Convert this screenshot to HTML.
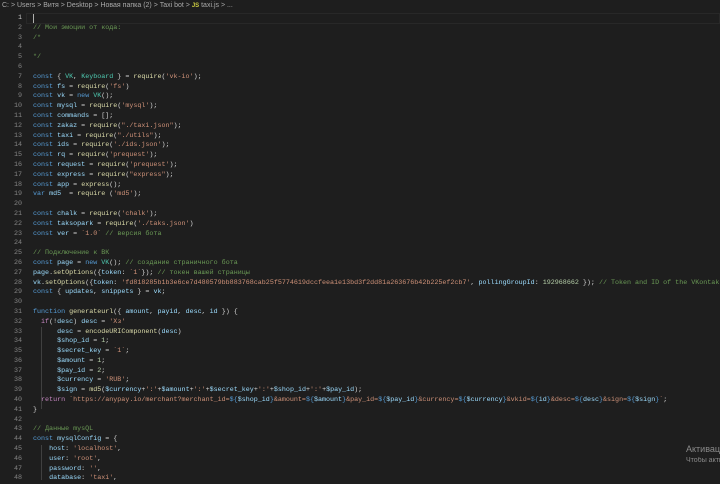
<!DOCTYPE html>
<html><head><meta charset="utf-8"><style>
html,body{margin:0;padding:0;width:720px;height:480px;overflow:hidden;background:#1e1e1e}
.bc{position:absolute;left:2px;top:2px;font:7px "Liberation Sans",sans-serif;color:#a9a9a9;white-space:nowrap}
.bc .js{color:#cbcb41;font-weight:bold;font-size:6px}
.ln{position:absolute;left:0;top:14px;width:22px;text-align:right;font:6.7px/9.79px "Liberation Mono",monospace;color:#858585;white-space:pre}
.code{position:absolute;left:33px;top:14px;width:687px;height:466px;overflow:hidden;font:6.7px/9.79px "Liberation Mono",monospace;color:#d4d4d4;white-space:pre}
.cur{position:absolute;left:26px;top:13px;width:692px;height:9px;border:1px solid #282828}
.caret{position:absolute;left:33px;top:14px;width:1px;height:9px;background:#aeafad}
.k{color:#569cd6}.v{color:#9cdcfe}.f{color:#dcdcaa}.s{color:#ce9178}.c{color:#6a9955}.n{color:#b5cea8}.t{color:#4ec9b0}.p{color:#c586c0}
.wm{position:absolute;left:686px;top:444px;font:9px "Liberation Sans",sans-serif;color:#8a8a8a;white-space:nowrap;width:34px;overflow:hidden}
.wm2{position:absolute;left:686px;top:457px;font:7px "Liberation Sans",sans-serif;color:#8a8a8a;white-space:nowrap;width:34px;overflow:hidden}
.g{position:absolute;width:1px;background:#404040}
</style></head><body>
<div class="bc">C: &gt; Users &gt; Витя &gt; Desktop &gt; Новая папка (2) &gt; Taxi bot &gt; <span class="js">JS</span> taxi.js &gt; ...</div>
<div class="cur"></div><div class="caret"></div>
<div class="g" style="left:41px;top:327px;height:82px"></div>
<div class="g" style="left:41px;top:445px;height:35px"></div>
<div class="ln"><span style="color:#c6c6c6">1</span>
2
3
4
5
6
7
8
9
10
11
12
13
14
15
16
17
18
19
20
21
22
23
24
25
26
27
28
29
30
31
32
33
34
35
36
37
38
39
40
41
42
43
44
45
46
47
48</div>
<div class="code">
<span class="c">// Мои эмоции от кода:</span>
<span class="c">/*</span>

<span class="c">*/</span>

<span class="k">const</span> { <span class="t">VK</span>, <span class="t">Keyboard</span> } = <span class="f">require</span>(<span class="s">'vk-io'</span>);
<span class="k">const</span> <span class="v">fs</span> = <span class="f">require</span>(<span class="s">'fs'</span>)
<span class="k">const</span> <span class="v">vk</span> = <span class="k">new</span> <span class="t">VK</span>();
<span class="k">const</span> <span class="v">mysql</span> = <span class="f">require</span>(<span class="s">'mysql'</span>);
<span class="k">const</span> <span class="v">commands</span> = [];
<span class="k">const</span> <span class="v">zakaz</span> = <span class="f">require</span>(<span class="s">"./taxi.json"</span>);
<span class="k">const</span> <span class="v">taxi</span> = <span class="f">require</span>(<span class="s">"./utils"</span>);
<span class="k">const</span> <span class="v">ids</span> = <span class="f">require</span>(<span class="s">'./ids.json'</span>);
<span class="k">const</span> <span class="v">rq</span> = <span class="f">require</span>(<span class="s">'prequest'</span>);
<span class="k">const</span> <span class="v">request</span> = <span class="f">require</span>(<span class="s">'prequest'</span>);
<span class="k">const</span> <span class="v">express</span> = <span class="f">require</span>(<span class="s">"express"</span>);
<span class="k">const</span> <span class="v">app</span> = <span class="f">express</span>();
<span class="k">var</span> <span class="v">md5</span>  = <span class="f">require</span> (<span class="s">'md5'</span>);

<span class="k">const</span> <span class="v">chalk</span> = <span class="f">require</span>(<span class="s">'chalk'</span>);
<span class="k">const</span> <span class="v">taksopark</span> = <span class="f">require</span>(<span class="s">'./taks.json'</span>)
<span class="k">const</span> <span class="v">ver</span> = <span class="s">`1.0`</span> <span class="c">// версия бота</span>

<span class="c">// Подключение к ВК</span>
<span class="k">const</span> <span class="v">page</span> = <span class="k">new</span> <span class="t">VK</span>(); <span class="c">// создание страничного бота</span>
<span class="v">page</span>.<span class="f">setOptions</span>({<span class="v">token</span>: <span class="s">`1`</span>}); <span class="c">// токен вашей страницы</span>
<span class="v">vk</span>.<span class="f">setOptions</span>({<span class="v">token</span>: <span class="s">'fd818285b1b3e6ce7d480579bb883768cab25f5774619dccfeea1e13bd3f2dd81a263676b42b225ef2cb7'</span>, <span class="v">pollingGroupId</span>: <span class="n">192968662</span> }); <span class="c">// Token and ID of the VKontakte</span>
<span class="k">const</span> { <span class="v">updates</span>, <span class="v">snippets</span> } = <span class="v">vk</span>;

<span class="k">function</span> <span class="f">generateurl</span>({ <span class="v">amount</span>, <span class="v">payid</span>, <span class="v">desc</span>, <span class="v">id</span> }) {
  <span class="p">if</span>(!<span class="v">desc</span>) <span class="v">desc</span> = <span class="s">'Xз'</span>
      <span class="v">desc</span> = <span class="f">encodeURIComponent</span>(<span class="v">desc</span>)
      <span class="v">$shop_id</span> = <span class="n">1</span>;
      <span class="v">$secret_key</span> = <span class="s">`1`</span>;
      <span class="v">$amount</span> = <span class="n">1</span>;
      <span class="v">$pay_id</span> = <span class="n">2</span>;
      <span class="v">$currency</span> = <span class="s">'RUB'</span>;
      <span class="v">$sign</span> = <span class="f">md5</span>(<span class="v">$currency</span>+<span class="s">':'</span>+<span class="v">$amount</span>+<span class="s">':'</span>+<span class="v">$secret_key</span>+<span class="s">':'</span>+<span class="v">$shop_id</span>+<span class="s">':'</span>+<span class="v">$pay_id</span>);
  <span class="p">return</span> <span class="s">`https://anypay.io/merchant?merchant_id=</span><span class="k">${</span><span class="v">$shop_id</span><span class="k">}</span><span class="s">&amp;amount=</span><span class="k">${</span><span class="v">$amount</span><span class="k">}</span><span class="s">&amp;pay_id=</span><span class="k">${</span><span class="v">$pay_id</span><span class="k">}</span><span class="s">&amp;currency=</span><span class="k">${</span><span class="v">$currency</span><span class="k">}</span><span class="s">&amp;vkid=</span><span class="k">${</span><span class="v">id</span><span class="k">}</span><span class="s">&amp;desc=</span><span class="k">${</span><span class="v">desc</span><span class="k">}</span><span class="s">&amp;sign=</span><span class="k">${</span><span class="v">$sign</span><span class="k">}</span><span class="s">`</span>;
}

<span class="c">// Данные mysQL</span>
<span class="k">const</span> <span class="v">mysqlConfig</span> = {
    <span class="v">host</span>: <span class="s">'localhost'</span>,
    <span class="v">user</span>: <span class="s">'root'</span>,
    <span class="v">password</span>: <span class="s">''</span>,
    <span class="v">database</span>: <span class="s">'taxi'</span>,</div>
<div class="wm">Активация Windows</div>
<div class="wm2">Чтобы активировать Windows</div>
</body></html>
